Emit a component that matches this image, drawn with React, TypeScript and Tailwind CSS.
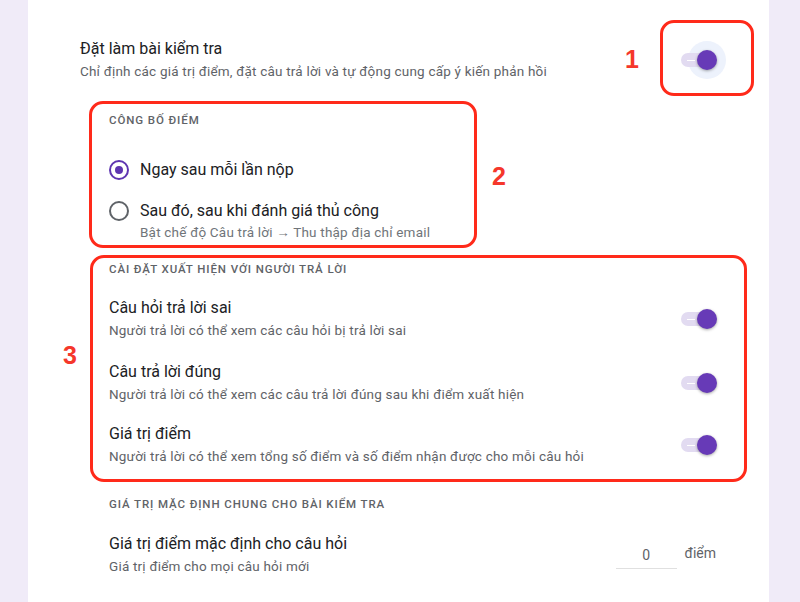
import React from 'react';

const RED = 'border-[#ff2a1a]';

function Toggle({ halo = false }: { halo?: boolean }) {
    return (
        <div className="relative h-[20px] w-[36px] shrink-0">
            {halo && <div className="absolute left-[7px] top-[-9px] h-[38px] w-[38px] rounded-full bg-[#edf2fc]" />}
            <div className="absolute left-0 top-[3px] h-[14px] w-[34px] rounded-full bg-[#e2dbf1]" />
            <div className="absolute left-[6px] top-[10px] h-[1px] w-[8px] bg-white" />
            <div className="absolute left-[16px] top-0 h-[20px] w-[20px] rounded-full bg-[#673ab7] shadow-[0_1px_3px_rgba(0,0,0,0.35)]" />
        </div>
    );
}

function Radio({ checked }: { checked?: boolean }) {
    return (
        <div className={`flex h-[20px] w-[20px] shrink-0 items-center justify-center rounded-full border-2 ${checked ? 'border-[#5e35b1]' : 'border-[#5f6368]'}`}>
            {checked && <div className="h-[8px] w-[8px] rounded-full bg-[#5e35b1]" />}
        </div>
    );
}

const Label: React.FC<{ children: React.ReactNode }> = ({ children }) => (
    <p className="text-[11.5px] font-medium uppercase leading-[16px] tracking-[0.9px] text-[#5f6368]">{children}</p>
);

const Num: React.FC<{ children: React.ReactNode }> = ({ children }) => (
    <span className="font-['Liberation_Sans',sans-serif] text-[25px] font-bold leading-[30px] text-[#f5372b]">{children}</span>
);

const toggles = [
    { title: 'Câu hỏi trả lời sai', desc: 'Người trả lời có thể xem các câu hỏi bị trả lời sai', mt: 'mt-[20px]' },
    { title: 'Câu trả lời đúng', desc: 'Người trả lời có thể xem các câu trả lời đúng sau khi điểm xuất hiện', mt: 'mt-[20px]' },
    { title: 'Giá trị điểm', desc: 'Người trả lời có thể xem tổng số điểm và số điểm nhận được cho mỗi câu hỏi', mt: 'mt-[18px]' },
];

export default function App() {
    return (
        <div className="flex h-[602px] w-[800px] overflow-hidden bg-[#f0ebf8] font-['Roboto',sans-serif] text-[#202124]">
            <div className="ml-[28px] h-[602px] w-[741px] bg-white">

                {/* quiz switch */}
                <div className="mt-[20px] flex h-[76px]">
                    <div className="pl-[52px] pt-[18px]">
                        <p className="text-[16px] leading-[22px]">Đặt làm bài kiểm tra</p>
                        <p className="text-[13.5px] leading-[22px] tracking-[0.2px] text-[#5f6368]">Chỉ định các giá trị điểm, đặt câu trả lời và tự động cung cấp ý kiến phản hồi</p>
                    </div>
                    <div className="ml-auto mr-[21px] flex items-center pt-[2px]">
                        <Num>1</Num>
                    </div>
                    <div className={`mr-[15px] flex h-[76px] w-[94px] items-center rounded-[14px] border-[3px] ${RED} pl-[18px] pt-[4px]`}>
                        <Toggle halo />
                    </div>
                </div>

                {/* release grade */}
                <div className="mt-[5px] flex items-center">
                    <div className={`ml-[61px] h-[147px] w-[388px] rounded-[14px] border-[3px] ${RED} pl-[17px] pt-[8px]`}>
                        <Label>Công bố điểm</Label>
                        <div className="mt-[30px] flex h-[24px] items-center gap-[11px]">
                            <Radio checked />
                            <span className="text-[16px]">Ngay sau mỗi lần nộp</span>
                        </div>
                        <div className="mt-[17px] flex h-[24px] items-center gap-[11px]">
                            <Radio />
                            <span className="text-[16px]">Sau đó, sau khi đánh giá thủ công</span>
                        </div>
                        <p className="pl-[31px] text-[13.5px] leading-[18px] tracking-[0.2px] text-[#70757a]">Bật chế độ Câu trả lời → Thu thập địa chỉ email</p>
                    </div>
                    <div className="ml-[15px] pt-[3px]">
                        <Num>2</Num>
                    </div>
                </div>

                {/* respondent settings */}
                <div className="mt-[7px] flex">
                    <div className="flex w-[62px] justify-end pr-[13px] pt-[85px]">
                        <Num>3</Num>
                    </div>
                    <div className={`h-[227px] w-[657px] rounded-[14px] border-[3px] ${RED} pl-[16px] pr-[27px] pt-[3px]`}>
                        <Label>Cài đặt xuất hiện với người trả lời</Label>
                        {toggles.map(t => (
                            <div key={t.title} className={`${t.mt} flex items-center`}>
                                <div className="flex-1">
                                    <p className="text-[16px] leading-[22px]">{t.title}</p>
                                    <p className="text-[13.5px] leading-[22px] tracking-[0.2px] text-[#5f6368]">{t.desc}</p>
                                </div>
                                <Toggle />
                            </div>
                        ))}
                    </div>
                </div>

                {/* defaults */}
                <div className="mt-[14px] pl-[81px] pr-[53px]">
                    <Label>Giá trị mặc định chung cho bài kiểm tra</Label>
                    <div className="mt-[21px] flex items-center">
                        <div className="flex-1">
                            <p className="text-[16px] leading-[22px]">Giá trị điểm mặc định cho câu hỏi</p>
                            <p className="text-[13.5px] leading-[22px] tracking-[0.2px] text-[#5f6368]">Giá trị điểm cho mọi câu hỏi mới</p>
                        </div>
                        <div className="flex w-[100px] items-center">
                            <div className="flex h-[27px] w-[62px] items-center justify-center border-b border-[#e0e0e0] pt-[1px] text-[14px] text-[#5f6368]">0</div>
                            <span className="ml-[8px] pb-[4px] text-[14px] text-[#5f6368]">điểm</span>
                        </div>
                    </div>
                </div>

            </div>
        </div>
    );
}
